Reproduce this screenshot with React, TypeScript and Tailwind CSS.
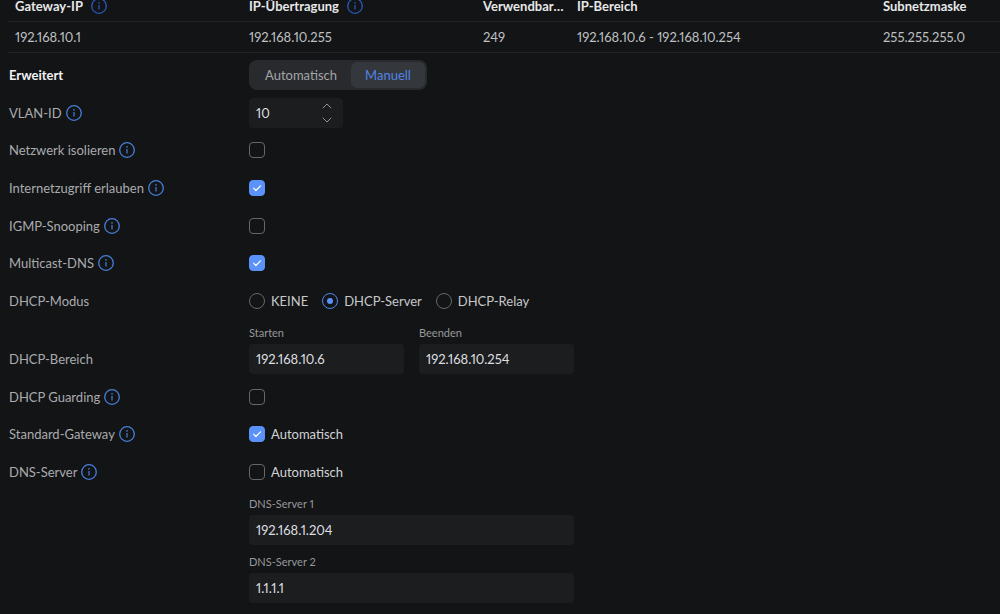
import { useId, useState } from "react";
import type { ReactNode } from "react";

function InfoIcon({ label, dim = false }: { label: string; dim?: boolean }) {
  return (
    <button
      type="button"
      aria-label={`Info: ${label}`}
      className={`size-4 shrink-0 ${dim ? "text-[#2a59bd]" : "text-[#477fdc]"}`}
    >
      <svg viewBox="0 0 16 16" fill="none" className="block size-4">
        <circle cx="8" cy="8" r="7.3" stroke="currentColor" strokeWidth="1.3" />
        <path d="M8 7v4.4" stroke="currentColor" strokeWidth="1.2" />
        <circle cx="8" cy="4.9" r="0.8" fill="currentColor" />
      </svg>
    </button>
  );
}

function Row({
  id,
  label,
  info = false,
  compact = false,
  children,
}: {
  id?: string;
  label: string;
  info?: boolean;
  compact?: boolean;
  children: ReactNode;
}) {
  return (
    <div className="flex items-end">
      <div className={`flex w-60 shrink-0 items-center gap-1 text-[#a9abae] ${compact ? "h-[29px]" : "h-[30px]"}`}>
        {id ? <label htmlFor={id}>{label}</label> : <span>{label}</span>}
        {info && <InfoIcon label={label} />}
      </div>
      <div className={`flex items-center ${compact ? "min-h-[29px]" : "min-h-[30px]"}`}>{children}</div>
    </div>
  );
}

function Checkbox({ id, initial = false }: { id: string; initial?: boolean }) {
  const [checked, setChecked] = useState(initial);
  return (
    <span className="grid size-4 shrink-0">
      <input
        id={id}
        type="checkbox"
        checked={checked}
        onChange={(e) => setChecked(e.target.checked)}
        className="col-start-1 row-start-1 size-4 appearance-none rounded-sm border border-[#65676d] checked:border-[#5a92fa] checked:bg-[#5a92fa]"
      />
      {checked && (
        <svg viewBox="0 0 16 16" fill="none" className="pointer-events-none col-start-1 row-start-1 size-4">
          <path d="M4.6 8.2l2.3 2.3 4.6-4.7" stroke="#fff" strokeWidth="1.2" strokeLinecap="round" strokeLinejoin="round" />
        </svg>
      )}
    </span>
  );
}

function CheckRow({
  label,
  text,
  initial,
  info = true,
  compact,
}: {
  label: string;
  text?: string;
  initial?: boolean;
  info?: boolean;
  compact?: boolean;
}) {
  const id = useId();
  return (
    <Row id={id} label={label} info={info} compact={compact}>
      <Checkbox id={id} initial={initial} />
      {text && (
        <label htmlFor={id} className="ml-1.5 text-[#d2d3d5]">
          {text}
        </label>
      )}
    </Row>
  );
}

function Field({ label, value, className }: { label: string; value: string; className: string }) {
  const id = useId();
  return (
    <div className={`flex flex-col gap-0.5 ${className}`}>
      <label htmlFor={id} className="h-[18px] text-[11px] leading-[18px] text-[#96989b]">
        {label}
      </label>
      <input
        id={id}
        type="text"
        defaultValue={value}
        className="h-[30px] w-full rounded-sm bg-[#1c1d1f] px-[7px] text-[#dedfe0] outline-none"
      />
    </div>
  );
}

function ModeSwitch() {
  const [mode, setMode] = useState("Manuell");
  return (
    <div className="flex h-[30px] rounded-lg bg-[#282a2d] p-0.5">
      {["Automatisch", "Manuell"].map((m) => (
        <button
          key={m}
          type="button"
          aria-pressed={mode === m}
          onClick={() => setMode(m)}
          className={`rounded-md px-3.5 ${mode === m ? "bg-[#34373c] text-[#5085e4]" : "text-[#a4a6a9]"}`}
        >
          {m}
        </button>
      ))}
    </div>
  );
}

function VlanInput({ id }: { id: string }) {
  const [value, setValue] = useState(10);
  return (
    <div className="flex h-[30px] w-[94px] items-center rounded-sm bg-[#1c1d1f] pr-2.5 pl-[7px]">
      <input
        id={id}
        type="number"
        value={value}
        onChange={(e) => setValue(Number(e.target.value))}
        className="min-w-0 flex-1 [appearance:textfield] text-[#dedfe0] outline-none [&::-webkit-inner-spin-button]:appearance-none"
      />
      <div className="flex flex-col text-[#8f9194]">
        <button type="button" aria-label="Erhöhen" onClick={() => setValue(value + 1)}>
          <svg viewBox="0 0 12 14" fill="none" className="block h-3.5 w-3">
            <path d="M2 9l4-4 4 4" stroke="currentColor" strokeLinecap="round" />
          </svg>
        </button>
        <button type="button" aria-label="Verringern" onClick={() => setValue(value - 1)}>
          <svg viewBox="0 0 12 14" fill="none" className="block h-3.5 w-3">
            <path d="M2 5l4 4 4-4" stroke="currentColor" strokeLinecap="round" />
          </svg>
        </button>
      </div>
    </div>
  );
}

function DhcpMode() {
  const [mode, setMode] = useState("DHCP-Server");
  return (
    <div role="radiogroup" aria-label="DHCP-Modus" className="flex gap-3.5">
      {["KEINE", "DHCP-Server", "DHCP-Relay"].map((m) => (
        <label key={m} className="flex items-center gap-1.5 text-[#c6c8ca]">
          <input
            type="radio"
            name="dhcp-mode"
            checked={mode === m}
            onChange={() => setMode(m)}
            className="grid size-4 shrink-0 appearance-none place-items-center rounded-full border border-[#65676d] checked:border-[#4f86ea] checked:before:size-1.5 checked:before:rounded-full checked:before:bg-[#5a92fa]"
          />
          {m}
        </label>
      ))}
    </div>
  );
}

const columns = [
  { title: "Gateway-IP", value: "192.168.10.1", info: true, width: "w-[234px]" },
  { title: "IP-Übertragung", value: "192.168.10.255", info: true, width: "w-[234px]" },
  { title: "Verwendbare IPs", value: "249", width: "w-[94px]" },
  { title: "IP-Bereich", value: "192.168.10.6 - 192.168.10.254", width: "w-auto" },
  { title: "Subnetzmaske", value: "255.255.255.0", width: "w-[124px]" },
];

export default function App() {
  return (
    <main className="min-h-screen overflow-hidden bg-[#131416] pb-3 pl-2 font-['Lato',sans-serif] text-[13px] leading-4 proportional-nums">
      <table className="-mt-[9px] w-full table-fixed border-collapse text-left">
        <thead>
          <tr className="h-[30px] border-b border-[#212224] text-[#e6e7e8]">
            {columns.map((c) => (
              <th key={c.title} className={`p-0 pl-[7px] font-bold ${c.width}`}>
                <div className="flex items-center gap-2">
                  <span className="truncate">{c.title}</span>
                  {c.info && <InfoIcon label={c.title} dim />}
                </div>
              </th>
            ))}
          </tr>
        </thead>
        <tbody>
          <tr className="h-[31px] border-b border-[#212224] text-[#bfc0c2]">
            {columns.map((c) => (
              <td key={c.title} className="p-0 pl-[7px]">
                {c.value}
              </td>
            ))}
          </tr>
        </tbody>
      </table>

      <form className="mt-[7px] flex flex-col gap-2 pl-px">
        <div className="flex items-center">
          <h2 className="w-60 shrink-0 font-bold text-[#f1f2f3]">Erweitert</h2>
          <ModeSwitch />
        </div>
        <Row id="vlan" label="VLAN-ID" info>
          <VlanInput id="vlan" />
        </Row>
        <CheckRow label="Netzwerk isolieren" compact />
        <CheckRow label="Internetzugriff erlauben" initial />
        <CheckRow label="IGMP-Snooping" />
        <CheckRow label="Multicast-DNS" initial compact />
        <Row label="DHCP-Modus">
          <DhcpMode />
        </Row>
        <Row label="DHCP-Bereich">
          <div className="flex gap-[15px]">
            <Field label="Starten" value="192.168.10.6" className="w-[155px]" />
            <Field label="Beenden" value="192.168.10.254" className="w-[155px]" />
          </div>
        </Row>
        <CheckRow label="DHCP Guarding" />
        <CheckRow label="Standard-Gateway" text="Automatisch" initial compact />
        <CheckRow label="DNS-Server" text="Automatisch" />
        <div className="flex flex-col gap-2 pl-60">
          <Field label="DNS-Server 1" value="192.168.1.204" className="w-[325px]" />
          <Field label="DNS-Server 2" value="1.1.1.1" className="w-[325px]" />
        </div>
      </form>
    </main>
  );
}
